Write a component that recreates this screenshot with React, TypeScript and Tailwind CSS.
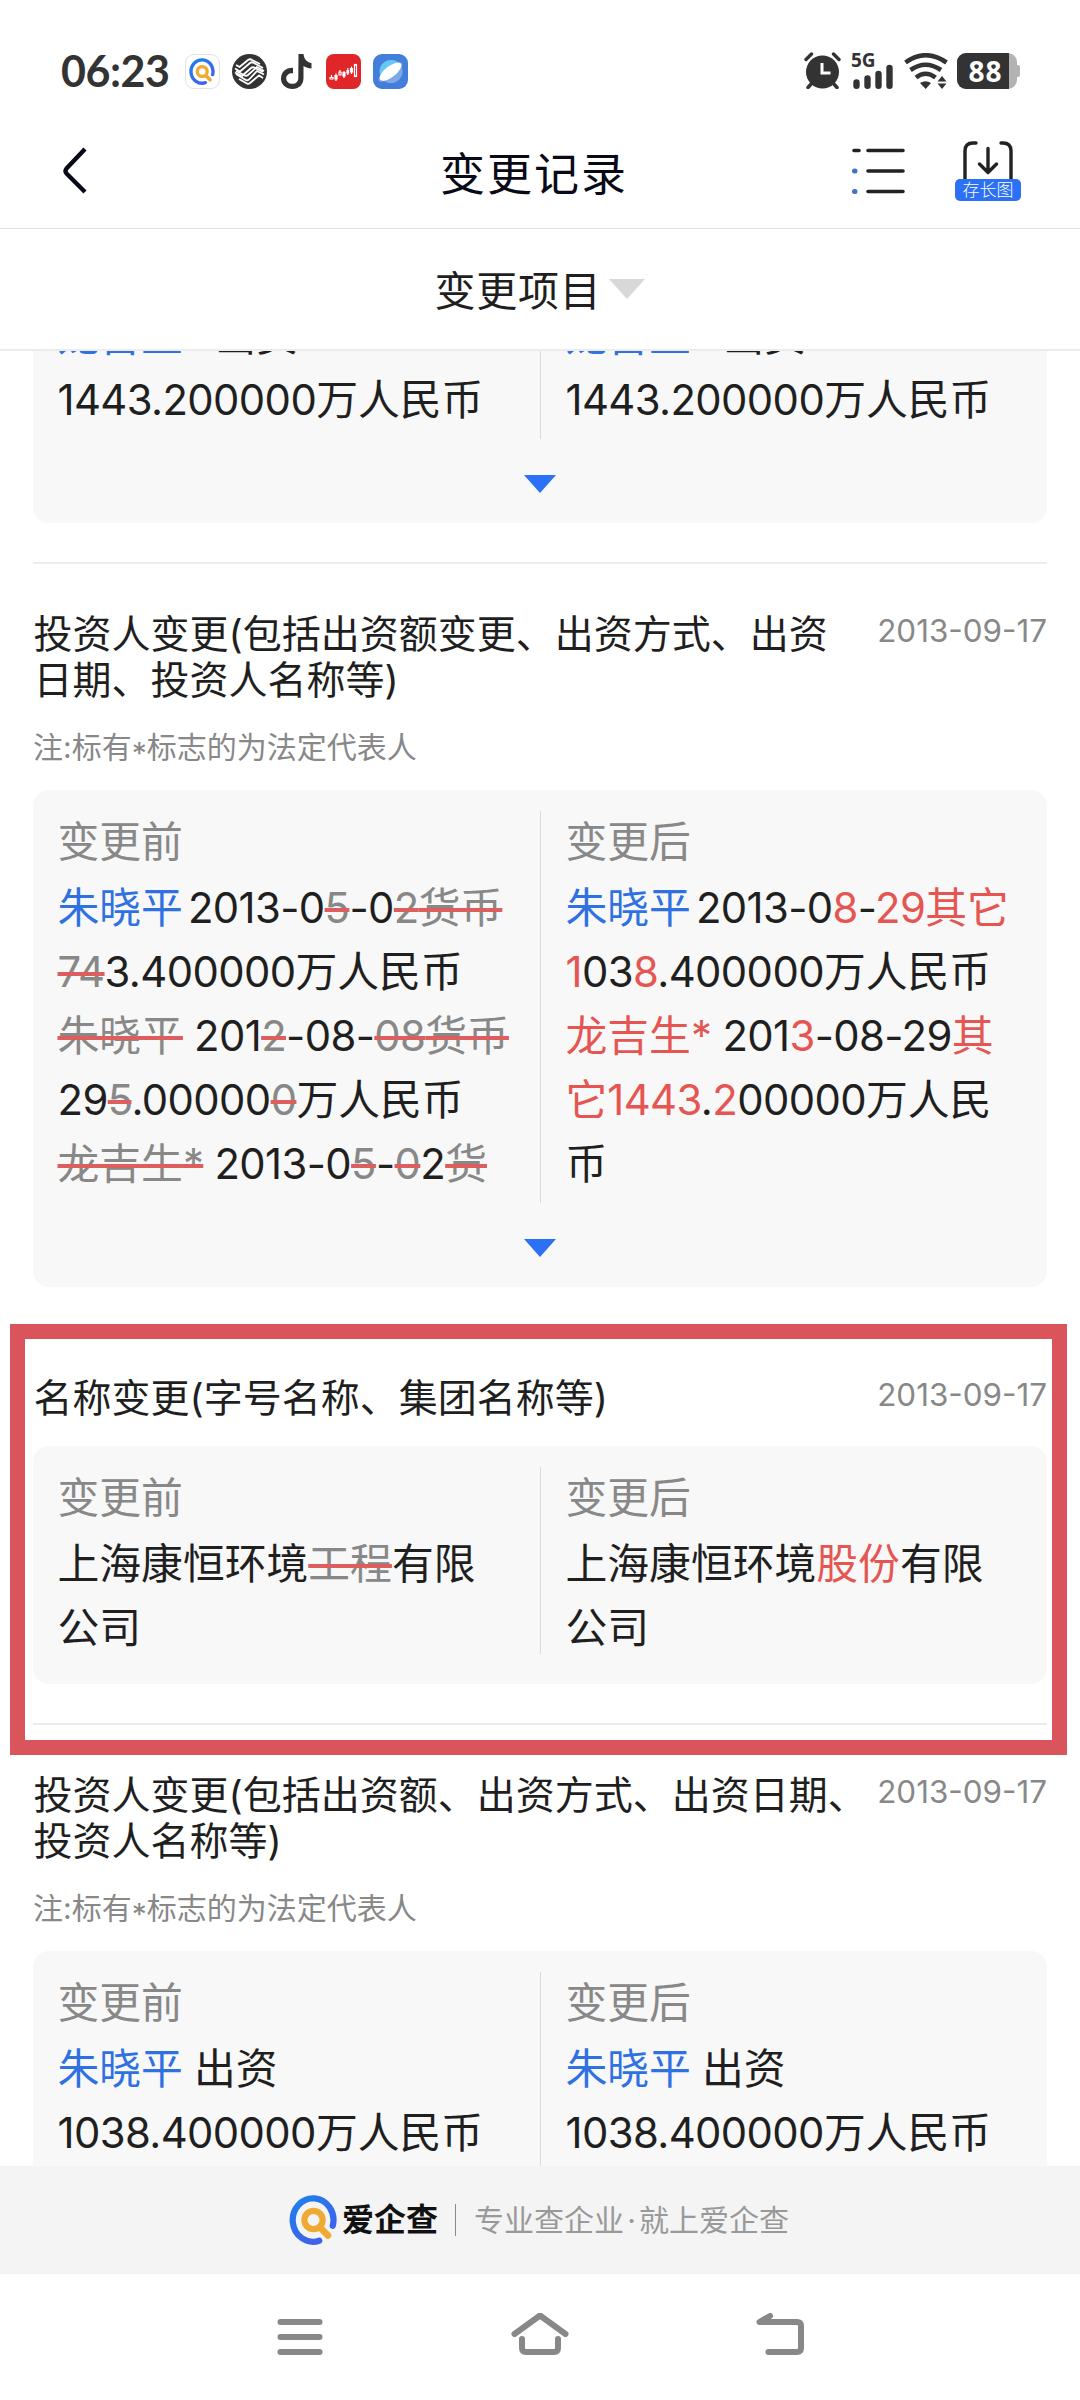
import clsx from 'clsx';

type Kind = 'link' | 'add' | 'del';
type Segment = string | [Kind, string];
type Line = Segment[];

type ChangeRecord = {
  title: string[];
  date: string;
  note?: boolean;
  before: Line[];
  after: Line[];
  expandable?: boolean;
};

const RECORDS: ChangeRecord[] = [
  {
    title: ['投资人变更(包括出资额变更、出资方式、出资', '日期、投资人名称等)'],
    date: '2013-09-17',
    note: true,
    before: [
      [['link', '朱晓平'], '2013-0', ['del', '5'], '-0', ['del', '2货币']],
      [['del', '74'], '3.400000万人民币'],
      [['del', '朱晓平'], ' 201', ['del', '2'], '-08-', ['del', '08货币']],
      ['29', ['del', '5'], '.00000', ['del', '0'], '万人民币'],
      [['del', '龙吉生*'], ' 2013-0', ['del', '5'], '-', ['del', '0'], '2', ['del', '货']],
    ],
    after: [
      [['link', '朱晓平'], '2013-0', ['add', '8'], '-', ['add', '29其它']],
      [['add', '1'], '03', ['add', '8'], '.400000万人民币'],
      [['add', '龙吉生*'], ' 201', ['add', '3'], '-08-29', ['add', '其']],
      [['add', '它1443'], '.', ['add', '2'], '00000万人民'],
      ['币'],
    ],
    expandable: true,
  },
  {
    title: ['名称变更(字号名称、集团名称等)'],
    date: '2013-09-17',
    before: [['上海康恒环境', ['del', '工程'], '有限'], ['公司']],
    after: [['上海康恒环境', ['add', '股份'], '有限'], ['公司']],
  },
  {
    title: ['投资人变更(包括出资额、出资方式、出资日期、', '投资人名称等)'],
    date: '2013-09-17',
    note: true,
    before: [[['link', '朱晓平'], ' 出资'], ['1038.400000万人民币']],
    after: [[['link', '朱晓平'], ' 出资'], ['1038.400000万人民币']],
    expandable: true,
  },
];

const PREVIOUS: Line[] = [[['link', '龙吉生*'], ' 出资'], ['1443.200000万人民币']];

export default function App() {
  return (
    <div className="relative flex h-[2400px] w-[1080px] flex-col overflow-hidden bg-white font-['Inter','Noto_Sans_CJK_SC',sans-serif] text-[#1f1f1f]">
      <StatusBar />
      <TitleBar />

      <div className="flex h-[122px] shrink-0 items-center justify-center gap-[8px] border-b-2 border-[#ececec]">
        <span className="pt-[3px] text-[41px] leading-[60px] tracking-[0.7px]">变更项目</span>
        <svg width="36" height="20" viewBox="0 0 36 20">
          <path d="M0 0H36L18 20Z" fill="#d8d8d8" />
        </svg>
      </div>

      <main className="min-h-0 flex-1 overflow-hidden px-[33px]">
        <section className="-mt-[47px] border-b-2 border-[#ececec] pb-[39px]">
          <DiffCard before={PREVIOUS} after={PREVIOUS} expandable continued />
        </section>
        {RECORDS.map((record) => (
          <RecordSection key={record.title[0]} record={record} />
        ))}
      </main>

      {/* highlight frame drawn over the name change record */}
      <div className="pointer-events-none absolute left-[10px] top-[1324px] h-[431px] w-[1057px] border-[15px] border-[#d9555b]" />

      <BrandFooter />
      <NavBar />
    </div>
  );
}

function RecordSection({ record }: { record: ChangeRecord }) {
  return (
    <section className="border-b-2 border-[#ececec] pb-[39px] pt-[46.5px]">
      <div className="flex items-start justify-between">
        <h2 className="whitespace-nowrap pl-[0.5px] text-[39px] leading-[46.5px]">
          {record.title.map((line) => (
            <span key={line} className="block">
              {line}
            </span>
          ))}
        </h2>
        <time className="-ml-12 whitespace-nowrap text-[31.4px] leading-[40px] text-[#888]">{record.date}</time>
      </div>
      {record.note ? (
        <p className="mb-[22px] mt-[22.5px] text-[30px] leading-[42px] text-[#888]">
          注:标有<span className="inline-block translate-y-[6px]">*</span>标志的为法定代表人
        </p>
      ) : (
        <div className="h-[25px]" />
      )}
      <DiffCard before={record.before} after={record.after} expandable={record.expandable} />
    </section>
  );
}

type DiffCardProps = {
  before: Line[];
  after: Line[];
  expandable?: boolean;
  continued?: boolean;
};

function DiffCard({ before, after, expandable, continued }: DiffCardProps) {
  return (
    <div className={clsx('rounded-2xl bg-[#f8f8f8]', expandable ? 'pb-[30px]' : 'pb-[24px]')}>
      <div className="grid grid-cols-[507px_1px_506px]">
        <DiffColumn label={continued ? undefined : '变更前'} lines={before} />
        <div
          className={clsx(
            'bg-[#d9d9d9]',
            !continued && 'mt-[21px]',
            expandable ? '-mb-[7px]' : 'mb-[6px]',
          )}
        />
        <DiffColumn label={continued ? undefined : '变更后'} lines={after} />
      </div>
      {expandable && (
        <svg className="mx-auto mt-[43px] block" width="32" height="18" viewBox="0 0 32 18">
          <path d="M0 0H32L16 18Z" fill="#2b70f5" />
        </svg>
      )}
    </div>
  );
}

function DiffColumn({ label, lines }: { label?: string; lines: Line[] }) {
  return (
    <div className="whitespace-pre pl-[24.5px] text-[41.8px]">
      {label && <p className="mb-[2px] mt-[21px] leading-[63px] text-[#888]">{label}</p>}
      {lines.map((line, i) => (
        <p key={i} className="h-16 leading-[64px]">
          {line.map((segment, j) => {
            const next = line[j + 1];
            return <DiffText key={j} segment={segment} tight={typeof next === 'string' && !next.startsWith(' ')} />;
          })}
        </p>
      ))}
    </div>
  );
}

function DiffText({ segment, tight }: { segment: Segment; tight: boolean }) {
  if (typeof segment === 'string') return <Mixed value={segment} />;
  const [kind, value] = segment;
  return (
    <span
      className={clsx(
        kind === 'link' && 'text-[#3071e2]',
        kind === 'link' && tight && 'mr-[5px]',
        kind === 'add' && 'text-[#e55653]',
        kind === 'del' && 'text-[#888] line-through decoration-[#dc5f5d] decoration-[4px]',
      )}
    >
      <Mixed value={value} />
    </span>
  );
}

// digits and punctuation are set slightly tighter than the Chinese text
function Mixed({ value }: { value: string }) {
  return (
    <>
      {value.split(/([\d.*\- ]+)/).map((part, i) =>
        i % 2 ? (
          <span key={i} className="tracking-[-0.6px]">
            {part}
          </span>
        ) : (
          part
        ),
      )}
    </>
  );
}

function StatusBar() {
  return (
    <div className="flex h-[118px] shrink-0 items-end justify-between pb-[29px] pl-[61px] pr-[60px] text-[#333]">
      <div className="flex h-9 items-center">
        <span className="w-[124px] whitespace-nowrap font-['Lato','Noto_Sans',sans-serif] text-[43px] font-bold leading-9 tracking-[-0.5px]">
          06:23
        </span>
        <div className="flex items-center gap-3">
          <span className="flex h-[35px] w-[35px] items-center justify-center rounded-[9px] border border-[#e2e2e2] bg-white">
            <BrandMark size={27} />
          </span>
          <svg width="35" height="35" viewBox="0 0 35 35" fill="none" stroke="#fff" strokeWidth="1.8" strokeLinejoin="round">
            <circle cx="17.5" cy="17.5" r="17.5" fill="#333" stroke="none" />
            <path d="M3 14.5L8 17.5L18 9Q20 7.500 22 9L31 14" />
            <path d="M4 11L7.500 13L16 6Q18 4.500 20 6L28 10" />
            <path d="M3 18.500L10 22L19 14Q21 12.500 23 14L31 18" />
            <path d="M32 17L25 13L16 21Q14 22.500 12 21L4 17" />
            <path d="M32 20.500L25 17L17 25.500Q15 27 13 25.500L4 20" />
            <path d="M31 24L27 21.500L18 29Q16 30.500 14 29L7 25" />
          </svg>
          <svg width="35" height="35" viewBox="0 0 35 35" fill="none">
            <path d="M19.500 0H24.500C25 5 28 8.500 32.500 9V14.500C29.500 14.500 27 13.500 24.500 12V24C24.500 31 19.500 35 13.500 35C7 35 2 30.500 2 24.500C2 18 7 13.500 14 13.800V19.300C10 19 7.200 21 7.200 24.500C7.200 27.500 10 29.800 13.200 29.800C17 29.800 19.300 27.500 19.300 24Z" fill="#333" />
          </svg>
          <svg width="35" height="35" viewBox="0 0 35 35" fill="none" stroke="#fff" strokeWidth="1.200">
            <rect width="35" height="35" rx="8" fill="#e02628" stroke="none" />
            <path d="M4 23.500H7V25H4ZM5.500 21V23M9 21.500H11V25H9ZM10 19.500V27M13 18H15V21H13ZM14 16V18M17 18.500H19V22H17ZM18 17V24M21 16.500H22.500V19H21ZM21.800 14V21M24.500 14.500H26.500V18H24.500ZM25.500 12.500V20" />
            <rect x="28.500" y="10.500" width="2" height="12" />
          </svg>
          <svg width="35" height="35" viewBox="0 0 35 35">
            <rect width="35" height="35" rx="9" fill="#447edb" />
            <circle cx="18" cy="17.500" r="11.500" fill="#7fa8e6" />
            <path d="M7 20A11.500 11.500 0 0 1 26 9Z" fill="#63c8f3" />
            <ellipse cx="17.500" cy="18" rx="14.500" ry="5" fill="#82a9e6" transform="rotate(-38 17.500 18)" />
            <ellipse cx="17.500" cy="17.700" rx="13" ry="5.500" fill="#fff" transform="rotate(-38 17.500 17.700)" />
          </svg>
        </div>
      </div>

      <div className="flex h-9 items-end">
        <svg width="37" height="37" viewBox="0 0 37 37" fill="none" strokeLinecap="round">
          <circle cx="18.500" cy="20" r="16.500" fill="#333" />
          <path d="M2 7.500L7.500 2M35 7.500L29.500 2" stroke="#333" strokeWidth="3.400" />
          <path d="M8 31L4 35.500M29 31L33 35.500" stroke="#333" strokeWidth="3.400" />
          <path d="M18 11V21H26.500" stroke="#fff" strokeWidth="3" strokeLinecap="butt" />
        </svg>
        <div className="relative ml-[10px] h-9 w-[43px]">
          <svg width="43" height="36" viewBox="0 0 43 36" stroke="#333" strokeWidth="6.400" strokeLinecap="round">
            <path d="M5.500 29.500V32.800M16.500 25.500V32.800M27.500 21V32.800M38.500 15V32.800" />
          </svg>
          <span className="absolute left-0 top-0 font-['Noto_Sans',sans-serif] text-[19px] font-bold leading-[15px]">5G</span>
        </div>
        <svg className="ml-[10px]" width="44" height="36" viewBox="0 0 44 36" fill="none" stroke="#333" strokeWidth="4.600">
          <path d="M1.500 9.500Q21.500 -5 42.500 9.500" />
          <path d="M6.500 17Q21.500 6.500 37 17" />
          <path d="M12 24.500Q21.500 17 31.500 24.500" />
          <path d="M16 30Q21.500 26.500 27 30L21.700 36Z" fill="#333" stroke="none" />
          <path d="M33.500 28.500L38 23L42.500 28.500ZM33.500 30.500L38 36L42.500 30.500Z" fill="#333" stroke="none" />
        </svg>
        <div className="ml-[9px] flex items-center">
          <div className="flex h-9 w-[60px] items-center overflow-hidden rounded-[9px] bg-[#b3b3b3]">
            <span className="flex h-9 w-[52px] items-center justify-center bg-[#333] pl-[5px] font-['Noto_Sans',sans-serif] text-[28px] font-bold leading-9 tracking-[1px] text-white">
              88
            </span>
          </div>
          <div className="h-3 w-[3px] rounded-r-[2px] bg-[#b3b3b3]" />
        </div>
      </div>
    </div>
  );
}

function TitleBar() {
  return (
    <header className="grid h-[111px] shrink-0 grid-cols-3 items-center border-b border-[#e0e0e0] pb-[4px] pl-[61px] pr-[59px]">
      <svg width="26" height="48" viewBox="0 0 26 48" fill="none" stroke="#080a18" strokeWidth="4.400" strokeLinejoin="round">
        <path d="M24 2L5.500 21.500Q3.500 24 5.500 26.500L24 45" />
      </svg>
      <h1 className="pr-[14px] pt-[7px] text-center text-[45px] leading-[64px] tracking-[2px] text-[#080a18]">变更记录</h1>
      <div className="flex items-center justify-end gap-[50px]">
        <svg width="53" height="46" viewBox="0 0 53 46" fill="none" strokeLinecap="round" strokeWidth="3.600">
          <path d="M2 2.500H7M16 2.500H51M16 23H51M16 43.500H51" stroke="#222" />
          <path d="M2.500 23H3M2.500 43.500H3" stroke="#3f74c4" strokeWidth="5" />
        </svg>
        <div className="flex w-[66px] flex-col items-center">
          <svg width="50" height="38" viewBox="0 0 50 38" fill="none" stroke="#222" strokeWidth="3.400" strokeLinecap="round" strokeLinejoin="round">
            <path d="M13 2H10Q2 2 2 10V40M38 2H40Q48 2 48 10V40" />
            <path d="M25 7.500V31M16.500 23L25 31.500L33.500 23" />
          </svg>
          <span className="flex h-[22px] w-[66px] items-center justify-center rounded-[5px] bg-[#2b70f5] text-[17px] font-light leading-none text-white">
            存长图
          </span>
        </div>
      </div>
    </header>
  );
}

function BrandMark({ size }: { size: number }) {
  return (
    <svg width={size} height={size} viewBox="-1 -1 52 52" fill="none" strokeLinecap="round">
      <defs>
        <linearGradient id="brand-ring" x1="0" y1="0" x2="0.600" y2="1">
          <stop offset="0" stopColor="#1f80ec" />
          <stop offset="1" stopColor="#3f62ea" />
        </linearGradient>
      </defs>
      <path d="M44.500 31A21.200 22.500 0 1 0 30.500 46.500" stroke="url(#brand-ring)" strokeWidth="6.500" />
      <circle cx="24.500" cy="25" r="9.500" stroke="#efaa33" strokeWidth="6.500" />
      <path d="M33 34.500L39.500 41" stroke="#efaa33" strokeWidth="7" />
    </svg>
  );
}

function BrandFooter() {
  return (
    <footer className="flex h-[108px] shrink-0 items-center bg-[#f4f4f4] pl-[289px]">
      <BrandMark size={50} />
      <span className="ml-[3px] text-[32px] font-bold leading-10 text-[#111]">爱企查</span>
      <span className="ml-[17px] h-8 w-px bg-[#888]" />
      <span className="ml-[18px] flex text-[30px] leading-10 text-[#999]">
        专业查企业<span className="w-[15px] text-center">·</span>就上爱企查
      </span>
    </footer>
  );
}

function NavBar() {
  return (
    <nav className="flex h-[126px] shrink-0 items-center justify-between bg-white pl-[277px] pr-[275px] pt-0.5" aria-label="系统导航">
      <svg width="46" height="50" viewBox="0 0 46 50" stroke="#888" strokeWidth="6" strokeLinecap="round">
        <path d="M3.500 9H42.500M3.500 24H42.500M3.500 39H42.500" />
      </svg>
      <svg width="58" height="50" viewBox="0 0 58 50" fill="none" stroke="#888" strokeWidth="6" strokeLinecap="round" strokeLinejoin="round">
        <path d="M3.500 21L29 2.500L54.500 21" />
        <path d="M11 26V35Q11 39 15 39H43Q47 39 47 35V26" />
      </svg>
      <svg width="49" height="50" viewBox="0 0 49 50" fill="none" stroke="#888" strokeWidth="6" strokeLinecap="round" strokeLinejoin="round">
        <path d="M14 3L3.500 9H41Q45 9 45 13V35Q45 39 41 39H12.500" />
      </svg>
    </nav>
  );
}
